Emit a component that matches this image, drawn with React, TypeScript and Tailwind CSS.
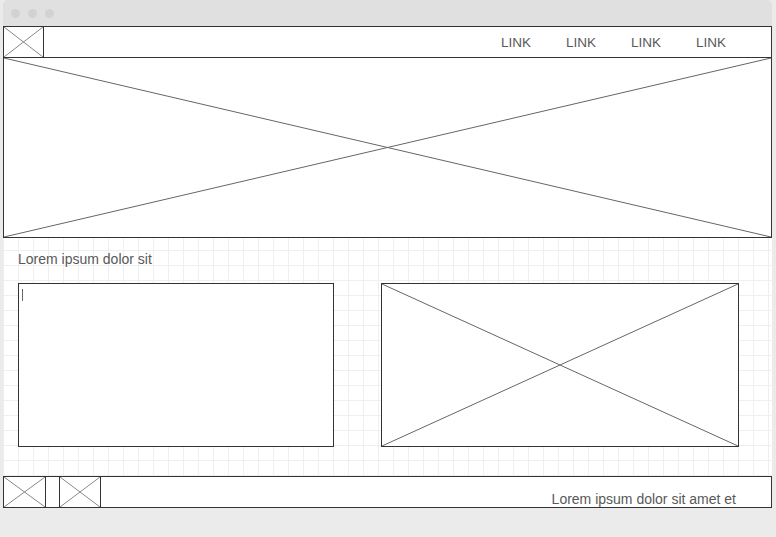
import React from "react";

const XBox = ({ className = "", stroke = "#777" }: { className?: string; stroke?: string }) => {
  return (
    <div className={"relative bg-white " + className}>
      <svg className="absolute inset-0 w-full h-full" preserveAspectRatio="none" viewBox="0 0 100 100">
        <line x1="0" y1="0" x2="100" y2="100" stroke={stroke} strokeWidth="1" vectorEffect="non-scaling-stroke" />
        <line x1="100" y1="0" x2="0" y2="100" stroke={stroke} strokeWidth="1" vectorEffect="non-scaling-stroke" />
      </svg>
    </div>
  );
};

const App = () => {
  const links = ["LINK", "LINK", "LINK", "LINK"];

  return (
    <div
      className="w-[776px] h-[537px] bg-[#ebebeb] pl-[3px] pr-[4px] overflow-hidden"
      style={{ fontFamily: "'Liberation Sans', Arial, sans-serif" }}
    >
      <div className="flex flex-col">
        {/* browser chrome */}
        <div className="h-[26px] bg-[#e0e0e0] rounded-t-[5px] flex items-center gap-[8px] pl-[8px]">
          <span className="w-[9px] h-[9px] rounded-full bg-[#d2d2d2]" />
          <span className="w-[9px] h-[9px] rounded-full bg-[#d2d2d2]" />
          <span className="w-[9px] h-[9px] rounded-full bg-[#d2d2d2]" />
        </div>

        {/* header */}
        <div className="h-[32px] border border-[#333] bg-white flex items-stretch">
          <XBox className="w-[40px] border-r border-[#333]" stroke="#888" />
          <nav className="ml-auto flex items-center gap-[35px] pr-[45px] pt-[3px]">
            {links.map((l, i) => (
              <span key={i} className="text-[13.5px] text-[#595959]">{l}</span>
            ))}
          </nav>
        </div>

        {/* hero */}
        <XBox className="h-[180px] border-x border-b border-[#333]" stroke="#666" />

        {/* content */}
        <div className="h-[238px] bg-white bg-[linear-gradient(#efefef_1px,transparent_1px),linear-gradient(90deg,#efefef_1px,transparent_1px)] bg-[size:15px_15px] bg-[position:0_12px] pl-[15px] pt-[13px]">
          <p className="text-[14px] text-[#595959] leading-[17px]">Lorem ipsum dolor sit</p>
          <div className="flex mt-[15px] gap-[47px]">
            <div className="w-[316px] h-[164px] border border-[#333] bg-white pl-[3px] pt-[5px]">
              <span className="block w-px h-[12px] bg-[#666]" />
            </div>
            <XBox className="w-[358px] h-[164px] border border-[#333]" stroke="#666" />
          </div>
        </div>

        {/* footer */}
        <div className="h-[32px] border border-[#333] bg-white flex items-stretch">
          <XBox className="w-[42px] border-r border-[#333]" stroke="#888" />
          <XBox className="w-[42px] ml-[13px] border-x border-[#333]" stroke="#888" />
          <div className="ml-auto flex items-end pr-[35px]">
            <span className="text-[14px] text-[#595959] leading-[15px]">Lorem ipsum dolor sit amet et</span>
          </div>
        </div>
      </div>
    </div>
  );
};

export default App;
